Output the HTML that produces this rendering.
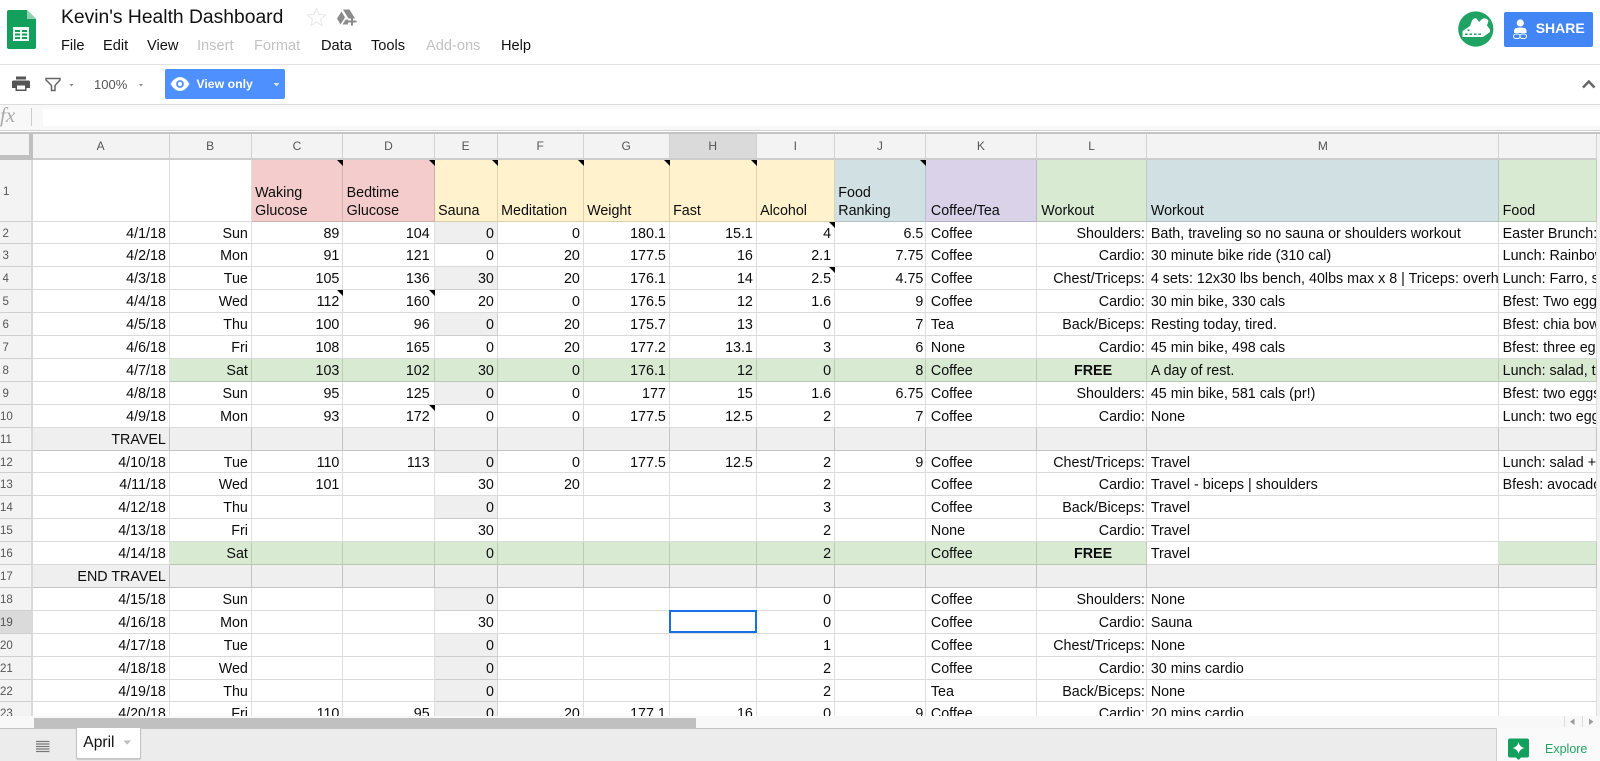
<!DOCTYPE html>
<html><head><meta charset="utf-8"><title>Kevin's Health Dashboard</title>
<style>
html,body{margin:0;padding:0;width:1600px;height:761px;overflow:hidden;background:#fff}
body{font-family:"Liberation Sans",Arial,sans-serif;color:#000;position:relative}
.a{position:absolute;white-space:nowrap}
.m{font-size:14.6px;top:38px;line-height:17px;color:#111}
.d{color:#c2c2c2}
.l{position:absolute;left:0;width:1600px}
#g{position:absolute;left:0;top:134px;width:1600px;height:582px;overflow:hidden;background:#f3f3f3}
.r{display:grid;grid-template-columns:32.5px 137.2px 82px 91.5px 91.5px 63px 86px 86px 87px 78.2px 91px 110.9px 110.7px 351.8px 98px;grid-template-rows:minmax(0,1fr);height:23px;font-size:14.3px;line-height:22px}
#g .r:nth-child(3),#g .r:nth-child(13),#g .r:nth-child(23){height:22px}
.r i{font-style:normal;display:block;position:relative;box-sizing:border-box;min-height:0;background:#fff;border-right:1px solid rgba(0,0,0,.13);border-bottom:1px solid rgba(0,0,0,.14);padding:1px 2.8px 0 3.4px;text-align:right;white-space:nowrap;overflow:hidden;color:#0c0c0c}
.r i:nth-child(5){padding-right:4px}
.r i:nth-child(11){padding-right:1.5px}
.r i:nth-child(12){padding-left:5px}
.r i:nth-child(13){padding-right:1.6px;padding-left:4.5px}
.r i:first-child{background:#f3f3f3;color:#555;font-size:11.5px;text-align:center;padding:1px 19px 0 0;overflow:hidden;border-right:2px solid #dadada;border-bottom-color:#cfcfcf}
.r i.x{text-align:left}
.r i.f{text-align:center;font-weight:bold}
.r i.e{background:#efefef}
.g i{background:#d9ead3}
.g i.w{background:#fff}
.s i{background:#efefef;border-color:rgba(0,0,0,.18)}
.r i.t{overflow:visible}
.r i.t::after{content:"";position:absolute;right:-1px;top:0;border-top:6px solid #000;border-left:6px solid transparent;z-index:2}
.r.h{height:26px;font-size:12px;line-height:25px}
.r.h i{background:#f3f3f3;text-align:center;color:#555;border-bottom:2px solid #cdcdcd;border-right-color:#d2d2d2;padding:0}
.r.h i:first-child{border-right:4px solid #c0c0c0;border-bottom:5px solid #c0c0c0}
.r.h i.sel{background:#dadada}
.r.o{height:62px;line-height:18px}
.r.o i{text-align:left;padding-top:42px}
.r.o i.two{padding-top:24px}
.r.o i:first-child{padding:23px 0 0 3px}
.r.o i.p{background:#f4cccc}.r.o i.y{background:#fff2cc}.r.o i.b{background:#d0e0e3}.r.o i.v{background:#d9d2e9}.r.o i.n{background:#d9ead3}
.r.c i:first-child{background:#dadada}
</style></head>
<body>
<div class="a" style="left:61px;top:6px;font-size:19.3px;line-height:24px;color:#111">Kevin's Health Dashboard</div>
<div class="a m" style="left:61px">File</div>
<div class="a m" style="left:103px">Edit</div>
<div class="a m" style="left:147px">View</div>
<div class="a m d" style="left:197px">Insert</div>
<div class="a m d" style="left:254px">Format</div>
<div class="a m" style="left:321px">Data</div>
<div class="a m" style="left:371px">Tools</div>
<div class="a m d" style="left:426px">Add-ons</div>
<div class="a m" style="left:501px">Help</div>

<div class="l" style="top:64px;height:1px;background:#e3e3e3"></div>
<div class="l" style="top:104px;height:1px;background:#dcdcdc"></div>
<div class="l" style="top:105px;height:25px;background:#f8f8f8"></div>
<div class="a" style="left:43px;top:109px;width:1557px;height:17px;background:#fff"></div>
<div class="l" style="top:130px;height:1px;background:#d0d0d0"></div>
<div class="l" style="top:132px;height:2px;background:#c4c4c4"></div>

<div class="a" style="left:94px;top:77px;font-size:13px;line-height:16px;color:#555">100%</div>
<div class="a" style="left:164.5px;top:69px;width:120.5px;height:30px;background:#4d90fe;border-radius:2px"></div>
<div class="a" style="left:196.4px;top:76px;font-size:12.3px;line-height:16px;font-weight:bold;color:#fff">View only</div>
<div class="a" style="left:1535.7px;top:20px;font-size:14px;line-height:16px;color:#fff;font-weight:bold;z-index:3">SHARE</div>
<div class="a" style="left:1504px;top:12px;width:88.7px;height:34.5px;background:#4285f4;border-radius:2px"></div>
<div class="a" style="left:0;top:103px;font:italic 21px/24px 'Liberation Serif',serif;color:#aaa">fx</div>

<div id="g">
<div class="r h"><i></i><i>A</i><i>B</i><i>C</i><i>D</i><i>E</i><i>F</i><i>G</i><i class="sel">H</i><i>I</i><i>J</i><i>K</i><i>L</i><i>M</i><i></i></div>
<div class="r o"><i>1</i><i style="background:#fff"></i><i style="background:#fff"></i><i class="p t two">Waking<br>Glucose</i><i class="p t two">Bedtime<br>Glucose</i><i class="y t">Sauna</i><i class="y t">Meditation</i><i class="y t">Weight</i><i class="y t">Fast</i><i class="y">Alcohol</i><i class="b t two">Food<br>Ranking</i><i class="v">Coffee/Tea</i><i class="n">Workout</i><i class="b">Workout</i><i class="n">Food</i></div>
<div class="r"><i>2</i><i>4/1/18</i><i>Sun</i><i>89</i><i>104</i><i class="e">0</i><i>0</i><i>180.1</i><i>15.1</i><i class="t">4</i><i>6.5</i><i class="x">Coffee</i><i>Shoulders:</i><i class="x">Bath, traveling so no sauna or shoulders workout</i><i class="x">Easter Brunch: eggs</i></div>
<div class="r"><i>3</i><i>4/2/18</i><i>Mon</i><i>91</i><i>121</i><i>0</i><i>20</i><i>177.5</i><i>16</i><i>2.1</i><i>7.75</i><i class="x">Coffee</i><i>Cardio:</i><i class="x">30 minute bike ride (310 cal)</i><i class="x">Lunch: Rainbow bowl</i></div>
<div class="r"><i>4</i><i>4/3/18</i><i>Tue</i><i>105</i><i>136</i><i class="e">30</i><i>20</i><i>176.1</i><i>14</i><i class="t">2.5</i><i>4.75</i><i class="x">Coffee</i><i>Chest/Triceps:</i><i class="x">4 sets: 12x30 lbs bench, 40lbs max x 8 | Triceps: overhead</i><i class="x">Lunch: Farro, salad</i></div>
<div class="r"><i>5</i><i>4/4/18</i><i>Wed</i><i class="t">112</i><i class="t">160</i><i>20</i><i>0</i><i>176.5</i><i>12</i><i>1.6</i><i>9</i><i class="x">Coffee</i><i>Cardio:</i><i class="x">30 min bike, 330 cals</i><i class="x">Bfest: Two eggs and</i></div>
<div class="r"><i>6</i><i>4/5/18</i><i>Thu</i><i>100</i><i>96</i><i class="e">0</i><i>20</i><i>175.7</i><i>13</i><i>0</i><i>7</i><i class="x">Tea</i><i>Back/Biceps:</i><i class="x">Resting today, tired.</i><i class="x">Bfest: chia bowl and</i></div>
<div class="r"><i>7</i><i>4/6/18</i><i>Fri</i><i>108</i><i>165</i><i>0</i><i>20</i><i>177.2</i><i>13.1</i><i>3</i><i>6</i><i class="x">None</i><i>Cardio:</i><i class="x">45 min bike, 498 cals</i><i class="x">Bfest: three eggs and</i></div>
<div class="r g"><i>8</i><i class="w">4/7/18</i><i>Sat</i><i>103</i><i>102</i><i>30</i><i>0</i><i>176.1</i><i>12</i><i>0</i><i>8</i><i class="x">Coffee</i><i class="f">FREE</i><i class="x">A day of rest.</i><i class="x">Lunch: salad, tuna</i></div>
<div class="r"><i>9</i><i>4/8/18</i><i>Sun</i><i>95</i><i>125</i><i class="e">0</i><i>0</i><i>177</i><i>15</i><i>1.6</i><i>6.75</i><i class="x">Coffee</i><i>Shoulders:</i><i class="x">45 min bike, 581 cals (pr!)</i><i class="x">Bfest: two eggs and</i></div>
<div class="r"><i>10</i><i>4/9/18</i><i>Mon</i><i>93</i><i class="t">172</i><i>0</i><i>0</i><i>177.5</i><i>12.5</i><i>2</i><i>7</i><i class="x">Coffee</i><i>Cardio:</i><i class="x">None</i><i class="x">Lunch: two eggs and</i></div>
<div class="r s"><i>11</i><i>TRAVEL</i><i></i><i></i><i></i><i></i><i></i><i></i><i></i><i></i><i></i><i></i><i></i><i></i><i></i></div>
<div class="r"><i>12</i><i>4/10/18</i><i>Tue</i><i>110</i><i>113</i><i class="e">0</i><i>0</i><i>177.5</i><i>12.5</i><i>2</i><i>9</i><i class="x">Coffee</i><i>Chest/Triceps:</i><i class="x">Travel</i><i class="x">Lunch: salad + more</i></div>
<div class="r"><i>13</i><i>4/11/18</i><i>Wed</i><i>101</i><i></i><i>30</i><i>20</i><i></i><i></i><i>2</i><i></i><i class="x">Coffee</i><i>Cardio:</i><i class="x">Travel - biceps | shoulders</i><i class="x">Bfesh: avocado toast</i></div>
<div class="r"><i>14</i><i>4/12/18</i><i>Thu</i><i></i><i></i><i class="e">0</i><i></i><i></i><i></i><i>3</i><i></i><i class="x">Coffee</i><i>Back/Biceps:</i><i class="x">Travel</i><i></i></div>
<div class="r"><i>15</i><i>4/13/18</i><i>Fri</i><i></i><i></i><i>30</i><i></i><i></i><i></i><i>2</i><i></i><i class="x">None</i><i>Cardio:</i><i class="x">Travel</i><i></i></div>
<div class="r g"><i>16</i><i class="w">4/14/18</i><i>Sat</i><i></i><i></i><i>0</i><i></i><i></i><i></i><i>2</i><i></i><i class="x">Coffee</i><i class="f">FREE</i><i class="x w">Travel</i><i></i></div>
<div class="r s"><i>17</i><i>END TRAVEL</i><i></i><i></i><i></i><i></i><i></i><i></i><i></i><i></i><i></i><i></i><i></i><i></i><i></i></div>
<div class="r"><i>18</i><i>4/15/18</i><i>Sun</i><i></i><i></i><i class="e">0</i><i></i><i></i><i></i><i>0</i><i></i><i class="x">Coffee</i><i>Shoulders:</i><i class="x">None</i><i></i></div>
<div class="r c"><i>19</i><i>4/16/18</i><i>Mon</i><i></i><i></i><i>30</i><i></i><i></i><i></i><i>0</i><i></i><i class="x">Coffee</i><i>Cardio:</i><i class="x">Sauna</i><i></i></div>
<div class="r"><i>20</i><i>4/17/18</i><i>Tue</i><i></i><i></i><i class="e">0</i><i></i><i></i><i></i><i>1</i><i></i><i class="x">Coffee</i><i>Chest/Triceps:</i><i class="x">None</i><i></i></div>
<div class="r"><i>21</i><i>4/18/18</i><i>Wed</i><i></i><i></i><i class="e">0</i><i></i><i></i><i></i><i>2</i><i></i><i class="x">Coffee</i><i>Cardio:</i><i class="x">30 mins cardio</i><i></i></div>
<div class="r"><i>22</i><i>4/19/18</i><i>Thu</i><i></i><i></i><i class="e">0</i><i></i><i></i><i></i><i>2</i><i></i><i class="x">Tea</i><i>Back/Biceps:</i><i class="x">None</i><i></i></div>
<div class="r"><i>23</i><i>4/20/18</i><i>Fri</i><i>110</i><i>95</i><i class="e">0</i><i>20</i><i>177.1</i><i>16</i><i>0</i><i>9</i><i class="x">Coffee</i><i>Cardio:</i><i class="x">20 mins cardio</i><i></i></div>
</div>

<div class="a" style="left:669px;top:609.5px;width:84px;height:19.5px;border:2px solid #1a6fe8"></div>

<div class="l" style="top:716px;height:11.5px;background:#f8f8f8"></div>
<div class="a" style="left:34px;top:717.5px;width:662px;height:10px;background:#c0c0c0"></div>
<div class="a" style="left:1564px;top:716px;width:1px;height:11px;background:#ddd"></div>
<div class="a" style="left:1581.5px;top:716px;width:1px;height:11px;background:#ddd"></div>
<div class="l" style="top:727.5px;height:33.5px;background:#ececec;border-top:1px solid #c4c4c4;box-sizing:border-box"></div>
<div class="a" style="left:1495.7px;top:728px;width:104.3px;height:33px;background:#fafafa;border-left:1px solid #d0d0d0;box-sizing:border-box"></div>
<div class="a" style="left:75.5px;top:728px;width:65px;height:31px;background:#fff;border:1px solid #c4c4c4;border-top:0;border-radius:0 0 2px 2px;box-sizing:border-box;box-shadow:0 1px 1px rgba(0,0,0,.15)"></div>
<div class="a" style="left:83.3px;top:733px;font-size:15.6px;line-height:19px;color:#111">April</div>
<div class="a" style="left:1545px;top:741px;font-size:12.5px;line-height:16px;color:#22a366">Explore</div>

<svg width="1600" height="761" viewBox="0 0 1600 761" style="position:absolute;left:0;top:0;z-index:2">
<!-- sheets logo -->
<path d="M9 10H27L36 19V47a2 2 0 0 1-2 2H9a2 2 0 0 1-2-2V12a2 2 0 0 1 2-2Z" fill="#12a05c"/>
<path d="M27 10L36 19H27Z" fill="#8ed1b1"/>
<path d="M13 27H29V41H13Z" fill="#f1faf5"/>
<path d="M15 30H20V32H15ZM22 30H27V32H22ZM15 33.500H20V35.500H15ZM22 33.500H27V35.500H22ZM15 37H20V39H15ZM22 37H27V39H22Z" fill="#12a05c"/>
<!-- star -->
<path d="M316.500 8.500L319 14.500L325.500 15L320.500 19.200L322 25.500L316.500 22.200L311 25.500L312.500 19.200L307.500 15L314 14.500Z" fill="none" stroke="#e8e8e8" stroke-width="1.100"/>
<!-- drive -->
<path d="M343 9.500H349.500L355 18.500H348.500ZM341.500 11.500L345 17.500L340.500 24.500L337 18.500Z" fill="#8a8a8a"/>
<path d="M346 19.500H348V24.500H342.500L345 20.500ZM351 17.500H353V20.500H356.500V22.500H353V25.500H351V22.500H348V20.500H351Z" fill="#8a8a8a"/>
<!-- avatar -->
<circle cx="1475.800" cy="29" r="17.600" fill="#1ea362"/>
<path d="M1462.500 37V31L1470 26L1472 20.500Q1474.500 17 1477 19L1479 22L1482 19Q1486.500 17 1488.500 21L1487 25.500L1490 29.500V32L1483 37Z" fill="#fff"/>
<path d="M1465 33.500H1467.500V35H1465ZM1469.500 33.500H1472V35H1469.500ZM1474 33.500H1476.500V35H1474ZM1478.500 33.500H1481V35H1478.500ZM1467.500 29.500H1469.500V31H1467.500Z" fill="#1ea362"/>
<!-- share icon -->
<circle cx="1520.300" cy="23" r="3.600" fill="#fff"/>
<path d="M1514 33V30.500Q1514 27.500 1520.300 27.500Q1526.500 27.500 1526.500 30.500V33Z" fill="#fff"/>
<rect x="1513.500" y="34" width="6.500" height="4.500" rx="2.200" fill="none" stroke="#fff" stroke-width="1"/>
<rect x="1520" y="34" width="6.500" height="4.500" rx="2.200" fill="none" stroke="#fff" stroke-width="1"/>
<!-- print -->
<path d="M16 76.500H26V79.500H16ZM13.500 80.500H28.500A1.500 1.500 0 0 1 30 82V88H26.500V91H15.500V88H12V82A1.500 1.500 0 0 1 13.500 80.500Z" fill="#555"/>
<path d="M17 85.500H25V89.500H17Z" fill="#fff"/>
<!-- filter -->
<path d="M46 78.500H60V80L55 85.500V90.500H51.500V85.500L46 80Z" fill="none" stroke="#666" stroke-width="1.500"/>
<path d="M69.500 84H73.500L71.500 86.500Z M139 84H143L141 86.500Z" fill="#888"/>
<!-- eye -->
<path d="M170.500 84Q174.500 77 180 77Q185.500 77 189.500 84Q185.500 91 180 91Q174.500 91 170.500 84Z" fill="#fff"/>
<circle cx="180" cy="84" r="3.900" fill="#4d90fe"/><circle cx="180" cy="84" r="2.200" fill="#fff"/>
<path d="M273.500 83H279.500L276.500 86.500Z" fill="#d5e4fd"/>
<!-- chevron -->
<path d="M1583 87.500L1588.800 81.500L1594.500 87.500" fill="none" stroke="#666" stroke-width="2.500"/>
<!-- fx separator -->
<path d="M31.500 108V126" stroke="#ccc" stroke-width="1"/>
<!-- hamburger -->
<path d="M36 741.500H49.500M36 744H49.500M36 746.500H49.500M36 749H49.500M36 751.500H49.500" stroke="#777" stroke-width="1.300"/>
<path d="M123.500 740.500H131L127.200 744.500Z" fill="#bbb"/>
<!-- scroll arrows -->
<path d="M1574.500 718.500V725L1570 721.800Z M1589 718.500V725L1593.500 721.800Z" fill="#9a9a9a"/>
<!-- explore -->
<path d="M1510 738.500H1527A2 2 0 0 1 1529 740.500V755.500A2 2 0 0 1 1527 757.500H1521L1518.500 760L1516 757.500H1510A2 2 0 0 1 1508 755.500V740.500A2 2 0 0 1 1510 738.500Z" fill="#12a05c"/>
<path d="M1518.500 742Q1519.500 747 1524.500 748Q1519.500 749 1518.500 754Q1517.500 749 1512.500 748Q1517.500 747 1518.500 742Z" fill="#fff"/>
</svg>
</body></html>
